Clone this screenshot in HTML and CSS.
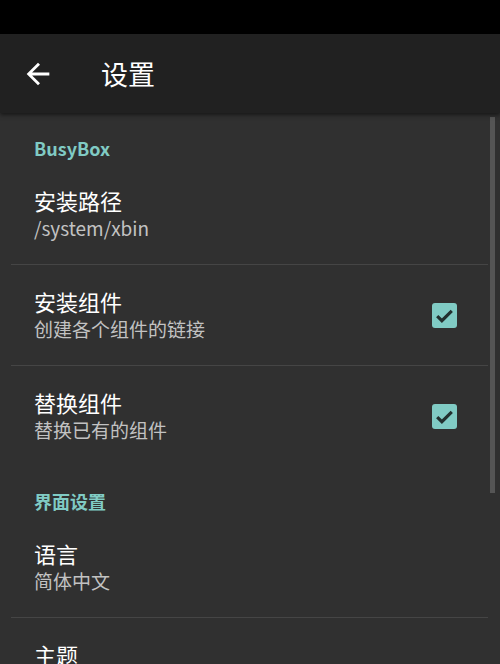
FILE: index.html
```html
<!DOCTYPE html>
<html lang="zh-CN">
<head>
  <meta charset="UTF-8">
  <meta name="viewport" content="width=device-width, initial-scale=1.0">
  <title>设置</title>
  <link rel="stylesheet" href="styles.css">
</head>
<body>
  <div class="statusbar"></div>
  <div class="toolbar">
    <svg class="back" viewBox="0 0 24 24"><path d="M20 11H7.83l5.59-5.59L12 4l-8 8 8 8 1.41-1.41L7.83 13H20v-2z" fill="#fff"/></svg>
    <div class="title">设置</div>
  </div>

  <div class="content">
    <div class="scrollbar"></div>

    <div class="category">BusyBox</div>
    <div class="item">
      <div class="texts">
        <div class="item-title">安装路径</div>
        <div class="item-sub">/system/xbin</div>
      </div>
    </div>
    <div class="divider"></div>
    <div class="item">
      <div class="texts">
        <div class="item-title">安装组件</div>
        <div class="item-sub">创建各个组件的链接</div>
      </div>
      <div class="check"><svg viewBox="0 0 24 24"><path d="M5 12.5l4.5 4.5L19 7.5" fill="none" stroke="#22302f" stroke-width="3"/></svg></div>
    </div>
    <div class="divider"></div>
    <div class="item">
      <div class="texts">
        <div class="item-title">替换组件</div>
        <div class="item-sub">替换已有的组件</div>
      </div>
      <div class="check"><svg viewBox="0 0 24 24"><path d="M5 12.5l4.5 4.5L19 7.5" fill="none" stroke="#22302f" stroke-width="3"/></svg></div>
    </div>

    <div class="category">界面设置</div>
    <div class="item">
      <div class="texts">
        <div class="item-title">语言</div>
        <div class="item-sub">简体中文</div>
      </div>
    </div>
    <div class="divider"></div>
    <div class="item">
      <div class="texts">
        <div class="item-title">主题</div>
        <div class="item-sub">深色</div>
      </div>
    </div>
  </div>
</body>
</html>
```

FILE: styles.css
```css
body {
  margin: 0;
  background-color: #303030;
  font-family: "Noto Sans CJK SC", "Noto Sans", sans-serif;
  height: 664px;
  overflow: hidden;
}
.statusbar {
  height: 34px;
  background-color: #000;
}
.toolbar {
  height: 79px;
  background-color: #212121;
  display: flex;
  align-items: center;
  box-shadow: 0 2px 4px rgba(0, 0, 0, 0.5);
  position: relative;
  z-index: 1;
}
.back {
  width: 34px;
  height: 34px;
  margin-left: 21px;
}
.title {
  color: #fff;
  font-size: 27px;
  margin-left: 46px;
  line-height: 1;
}
.content {
  position: relative;
}
.scrollbar {
  position: absolute;
  left: 490px;
  top: 4px;
  width: 5px;
  height: 376px;
  background-color: #555;
}
.category {
  height: 51px;
  box-sizing: border-box;
  padding: 23px 0 0 34px;
  color: #80cbc4;
  font-size: 18px;
  font-weight: bold;
  line-height: 24px;
}
.item {
  height: 100px;
  display: flex;
  align-items: center;
  padding: 0 43px 0 34px;
}
.texts {
  flex: 1;
  margin-top: -2px;
}
.item-title {
  color: #fff;
  font-size: 22px;
  line-height: 28px;
}
.item-sub {
  color: #c2c2c2;
  font-size: 19px;
  line-height: 27px;
}
.check {
  width: 25px;
  height: 25px;
  border-radius: 3px;
  background-color: #80cbc4;
}
.check svg {
  width: 25px;
  height: 25px;
  display: block;
}
.divider {
  height: 1px;
  background-color: #454545;
  margin: 0 12px 0 11px;
}
```
